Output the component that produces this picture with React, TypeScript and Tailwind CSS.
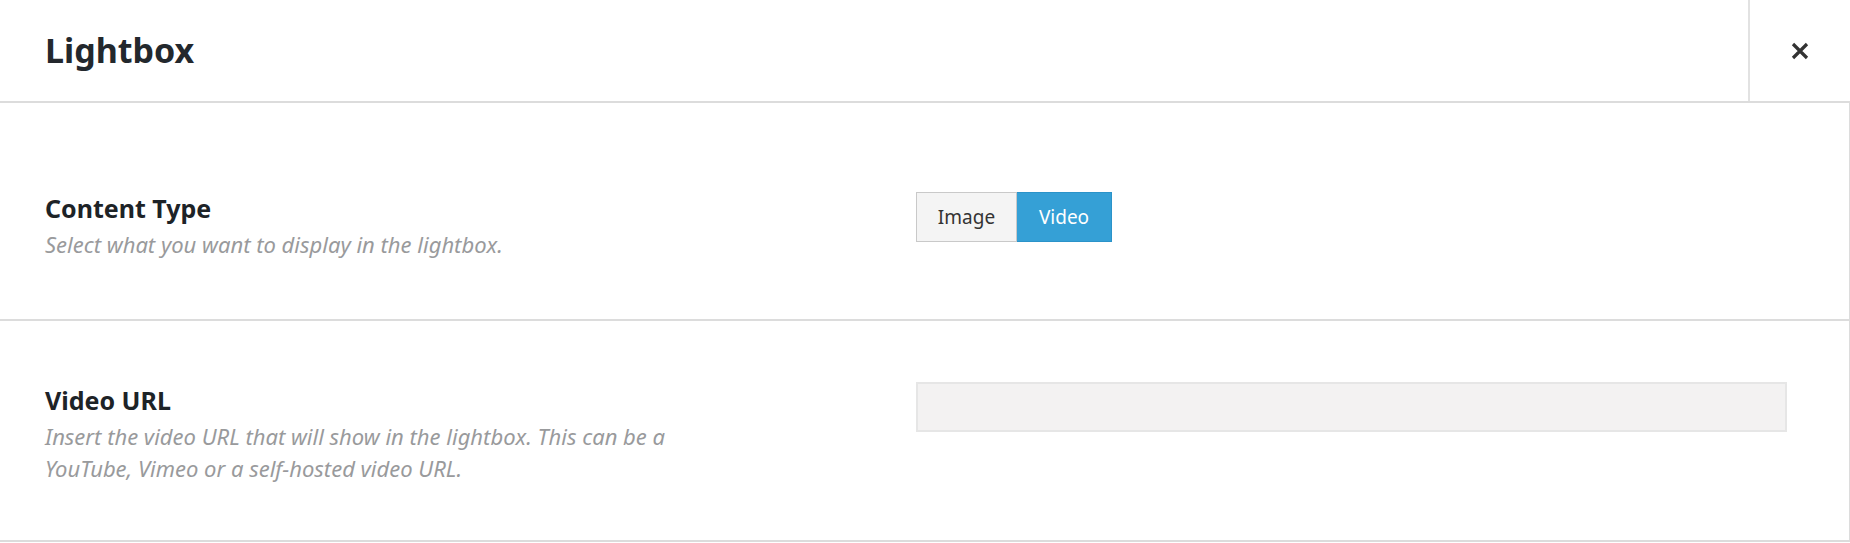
import { useState } from 'react'

const font = { fontFamily: '"Noto Sans", "Open Sans", sans-serif' }

interface FieldProps {
  label: string
  description: string
  first?: boolean
  children: React.ReactNode
}

function Field({ label, description, first, children }: FieldProps) {
  return (
    <div
      className={`flex border-b-2 border-r border-[#dcdcdc] px-[45px] ${
        first ? 'pt-[87px] pb-[59px]' : 'pt-[61px] pb-[56px]'
      }`}
    >
      <div className="w-[871px] shrink-0">
        <p className="text-[25px] font-bold leading-[36px] text-[#1d2327]">{label}</p>
        <p className="mt-[2px] max-w-[690px] text-[22px] italic leading-[32px] text-[#999a9c]">
          {description}
        </p>
      </div>
      <div className={`flex-1 ${first ? 'pt-[2px]' : ''}`}>{children}</div>
    </div>
  )
}

export default function App() {
  const [type, setType] = useState<'image' | 'video'>('video')
  const [url, setUrl] = useState('')

  return (
    <div className="h-[543px] w-[1850px] bg-white" style={font}>
      <div className="flex h-[103px] items-stretch border-b-2 border-[#dcdcdc]">
        <h1 className="flex flex-1 items-center pl-[45px] text-[34px] font-bold text-[#23282d]">
          Lightbox
        </h1>
        <button className="flex w-[102px] items-center justify-center border-l-2 border-[#e2e2e2] text-[#333]">
          <svg width="18" height="18" viewBox="0 0 18 18" fill="none">
            <path d="M2 2L16 16M16 2L2 16" stroke="currentColor" strokeWidth="3.2" strokeLinecap="butt" />
          </svg>
        </button>
      </div>

      <Field
        first
        label="Content Type"
        description="Select what you want to display in the lightbox."
      >
        <div className="flex">
          <button
            onClick={() => setType('image')}
            className={`h-[50px] w-[101px] border text-[19px] ${
              type === 'image'
                ? 'border-[#1e8cbe] bg-[#35a0d6] text-white'
                : 'border-[#c9c9c9] bg-[#f4f4f4] text-[#333]'
            }`}
          >
            Image
          </button>
          <button
            onClick={() => setType('video')}
            className={`h-[50px] w-[95px] border border-l-0 text-[19px] ${
              type === 'video'
                ? 'border-[#2b93c9] bg-[#35a0d6] text-white'
                : 'border-[#c9c9c9] bg-[#f4f4f4] text-[#333]'
            }`}
          >
            Video
          </button>
        </div>
      </Field>

      <Field
        label="Video URL"
        description="Insert the video URL that will show in the lightbox. This can be a YouTube, Vimeo or a self-hosted video URL."
      >
        <input
          value={url}
          onChange={(e) => setUrl(e.target.value)}
          className="h-[50px] w-[871px] border-2 border-[#e6e6e6] bg-[#f3f2f2] px-3 text-[18px] outline-none"
        />
      </Field>
    </div>
  )
}
